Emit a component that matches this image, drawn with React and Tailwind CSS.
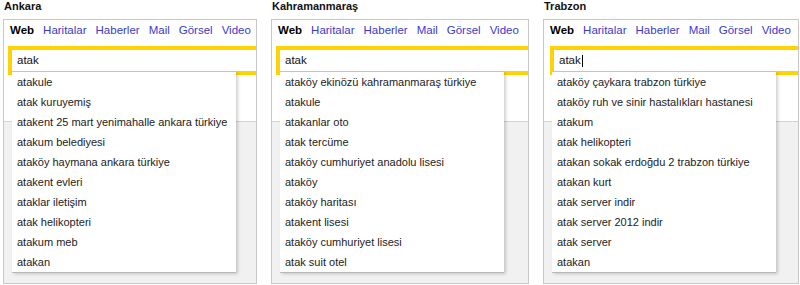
import React from 'react';

const tabs = ['Haritalar', 'Haberler', 'Mail', 'Görsel', 'Video'];

const panels = [
  {
    city: 'Ankara',
    x: 'ml-[3px]',
    w: 'w-[254px]',
    yellowX: 'ml-[4px]',
    items: [
      'atakule',
      'atak kuruyemiş',
      'atakent 25 mart yenimahalle ankara türkiye',
      'atakum belediyesi',
      'ataköy haymana ankara türkiye',
      'atakent evleri',
      'ataklar iletişim',
      'atak helikopteri',
      'atakum meb',
      'atakan',
    ],
  },
  {
    city: 'Kahramanmaraş',
    x: 'ml-[14px]',
    w: 'w-[258px]',
    yellowX: 'ml-[4px]',
    items: [
      'ataköy ekinözü kahramanmaraş türkiye',
      'atakule',
      'atakanlar oto',
      'atak tercüme',
      'ataköy cumhuriyet anadolu lisesi',
      'ataköy',
      'ataköy haritası',
      'atakent lisesi',
      'ataköy cumhuriyet lisesi',
      'atak suit otel',
    ],
  },
  {
    city: 'Trabzon',
    x: 'ml-[14px]',
    w: 'w-[256px]',
    yellowX: 'ml-[6px]',
    caret: true,
    items: [
      'ataköy çaykara trabzon türkiye',
      'ataköy ruh ve sinir hastalıkları hastanesi',
      'atakum',
      'atak helikopteri',
      'atakan sokak erdoğdu 2 trabzon türkiye',
      'atakan kurt',
      'atak server indir',
      'atak server 2012 indir',
      'atak server',
      'atakan',
    ],
  },
];

function Panel({ p }) {
  return (
    <div className={`${p.x} ${p.w} shrink-0`}>
      {/* şehir adı */}
      <div className="h-[19px] text-[11px] leading-[13px] font-bold text-[#111] pl-px">{p.city}</div>

      <div className="relative h-[265px] border border-[#c8c8c8] bg-[#f1f1f1] overflow-hidden">
        {/* üst beyaz alan */}
        <div className="h-[102px] bg-white border-b border-[#d4d4d4]">
          <div className="flex gap-[9px] pl-[6px] h-[20px] leading-[20px] text-[11.5px]">
            <span className="font-bold text-black">Web</span>
            {tabs.map((t) => (
              <span key={t} className="text-[#3a3acb]">{t}</span>
            ))}
          </div>

          <div className={`${p.yellowX} mt-[6px] mr-[-20px] border-4 border-[#ffd200] bg-white h-[29px] flex items-center pl-[5px]`}>
            <span className="text-[11.5px] text-[#111]">atak</span>
            {p.caret && <span className="inline-block w-px h-[12px] bg-black ml-px" />}
          </div>
        </div>

        {/* öneri listesi */}
        <div className="absolute left-[8px] top-[52px] w-[224px] h-[201px] bg-white border-b border-[#b8b8b8] shadow-[2px_1px_3px_rgba(0,0,0,0.18)]">
          {p.items.map((it) => (
            <div key={it} className="h-[20px] leading-[20px] pl-[5px] text-[11px] text-[#222] whitespace-nowrap">
              {it}
            </div>
          ))}
        </div>
      </div>
    </div>
  );
}

export default function App() {
  return (
    <div className="w-[800px] h-[285px] bg-white overflow-hidden flex pt-0" style={{ fontFamily: '"Liberation Sans", Arial, sans-serif' }}>
      {panels.map((p) => (
        <Panel key={p.city} p={p} />
      ))}
    </div>
  );
}
